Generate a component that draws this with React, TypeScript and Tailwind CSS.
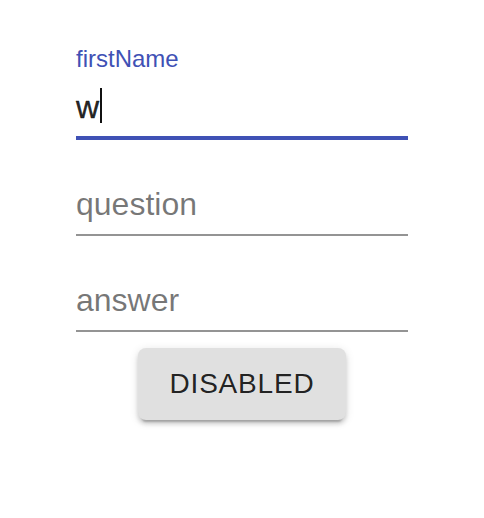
export default function App() {
  const font = { fontFamily: '"Liberation Sans", Arial, sans-serif' };
  return (
    <div className="w-[484px] h-[518px] bg-white flex flex-col items-center pt-[44px]" style={font}>
      <div className="w-[332px] flex flex-col">
        {/* firstName focused */}
        <div className="relative h-[96px] flex flex-col">
          <div className="absolute left-0 top-[3px] text-[24px] leading-[24px] text-[#3f51b5]">firstName</div>
          <div className="mt-[32px] h-[64px] pt-[12px] pb-[14px] flex items-stretch border-b-[4px] border-[#3f51b5]">
            <span className="text-[32px] leading-[38px] text-[rgba(0,0,0,0.87)] [-webkit-text-stroke:0.4px_rgba(0,0,0,0.87)]">w</span>
            <span className="w-[1.5px] h-[35px] bg-[#111] ml-[1px]"></span>
          </div>
        </div>
        {/* question */}
        <div className="relative h-[96px] flex flex-col">
          <div className="absolute left-0 top-[48px] text-[32px] leading-[32px] text-[rgba(0,0,0,0.54)]">question</div>
          <div className="mt-[32px] h-[64px] border-b-[2px] border-[rgba(0,0,0,0.42)]"></div>
        </div>
        {/* answer */}
        <div className="relative h-[96px] flex flex-col">
          <div className="absolute left-0 top-[48px] text-[32px] leading-[32px] text-[rgba(0,0,0,0.54)]">answer</div>
          <div className="mt-[32px] h-[64px] border-b-[2px] border-[rgba(0,0,0,0.42)]"></div>
        </div>
      </div>
      <button
        className="mt-[16px] w-[208px] h-[72px] rounded-[8px] bg-[#e0e0e0] text-[28px] tracking-[0.8px] text-[rgba(0,0,0,0.87)] shadow-[0_6px_2px_-4px_rgba(0,0,0,0.2),0_4px_4px_0_rgba(0,0,0,0.14),0_2px_10px_0_rgba(0,0,0,0.12)] flex items-center justify-center"
      >
        DISABLED
      </button>
    </div>
  );
}
